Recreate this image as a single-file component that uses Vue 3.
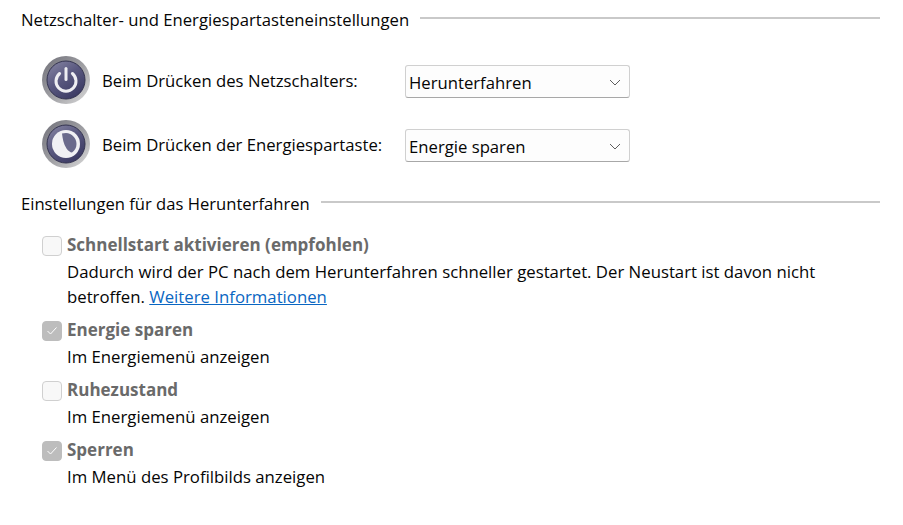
<script setup>
const buttons = [
  { label: 'Beim Drücken des Netzschalters:', value: 'Herunterfahren', icon: 'power' },
  { label: 'Beim Drücken der Energiespartaste:', value: 'Energie sparen', icon: 'sleep' }
]
const options = [
  { title: 'Schnellstart aktivieren (empfohlen)', checked: false, link: true },
  { title: 'Energie sparen', desc: 'Im Energiemenü anzeigen', checked: true },
  { title: 'Ruhezustand', desc: 'Im Energiemenü anzeigen', checked: false },
  { title: 'Sperren', desc: 'Im Menü des Profilbilds anzeigen', checked: true }
]
</script>

<template>
  <div class="page">
    <div class="group-head first">
      <span>Netzschalter- und Energiespartasteneinstellungen</span>
      <div class="rule"></div>
    </div>

    <div class="buttons">
      <div v-for="b in buttons" :key="b.icon" class="button-row">
        <svg class="round-icon" width="48" height="48" viewBox="0 0 48 48">
          <defs>
            <linearGradient :id="'ring-' + b.icon" x1="0" y1="0" x2="1" y2="1">
              <stop offset="0" stop-color="#6f6f78" />
              <stop offset="0.55" stop-color="#a2a2a6" />
              <stop offset="1" stop-color="#dcdcdc" />
            </linearGradient>
            <linearGradient :id="'face-' + b.icon" x1="0" y1="0" x2="0.7" y2="1">
              <stop offset="0" stop-color="#8a89a6" />
              <stop offset="0.5" stop-color="#5a5980" />
              <stop offset="1" stop-color="#3b3a63" />
            </linearGradient>
          </defs>
          <circle cx="24" cy="24" r="24" :fill="'url(#ring-' + b.icon + ')'" />
          <circle cx="24" cy="24" r="19" :fill="'url(#face-' + b.icon + ')'" stroke="#33334f" stroke-width="1" />
          <template v-if="b.icon === 'power'">
            <path d="M17.6 17.5a10 10 0 1 0 12.8 0" fill="none" stroke="#eeeef2" stroke-width="3" stroke-linecap="round" />
            <path d="M24 12.5v11" fill="none" stroke="#eeeef2" stroke-width="3" stroke-linecap="round" />
          </template>
          <template v-else>
            <circle cx="24" cy="24" r="14" fill="#f0f0f4" />
            <path d="M20 13.6c.6 5 1.500 10.500 4.500 14.800 1.800 2.500 3.700 3.800 5.500 4 3-2 4.500-5 4.500-8.400 0-5.800-4.700-10.800-10.500-11-1.400 0-2.800.2-4 .6z" fill="#6a6a8c" />
          </template>
        </svg>
        <span class="button-label">{{ b.label }}</span>
        <div class="select">
          <span>{{ b.value }}</span>
          <svg width="12" height="7" viewBox="0 0 12 7">
            <path d="M1 1l5 5 5-5" fill="none" stroke="#5f5f5f" stroke-width="1" />
          </svg>
        </div>
      </div>
    </div>

    <div class="group-head second">
      <span>Einstellungen für das Herunterfahren</span>
      <div class="rule"></div>
    </div>

    <div class="options">
      <div v-for="o in options" :key="o.title" class="option">
        <div class="check" :class="{ on: o.checked }">
          <svg v-if="o.checked" width="12" height="10" viewBox="0 0 12 10">
            <path d="M1.5 5l3 3 6-6.5" fill="none" stroke="#fff" stroke-width="1" />
          </svg>
        </div>
        <div class="option-text">
          <div class="option-title">{{ o.title }}</div>
          <div v-if="o.link" class="option-desc">
            Dadurch wird der PC nach dem Herunterfahren schneller gestartet. Der Neustart ist davon nicht<br>
            betroffen. <a class="link">Weitere Informationen</a>
          </div>
          <div v-else class="option-desc">{{ o.desc }}</div>
        </div>
      </div>
    </div>
  </div>
</template>

<style scoped>
.page {
  width: 903px;
  height: 525px;
  box-sizing: border-box;
  padding: 0 23px 0 21px;
  background: #fff;
  color: #050505;
  font-family: "Open Sans", "Noto Sans", sans-serif;
  font-size: 16.7px;
  overflow: hidden;
}

.group-head {
  display: flex;
  align-items: center;
  gap: 11px;
  height: 24px;
  white-space: nowrap;
}

.group-head.first {
  margin-top: 7px;
}

.group-head.second {
  margin-top: 23px;
  font-size: 16.6px;
}

.rule {
  flex: 1;
  height: 2px;
  margin-top: -2px;
  background: #c9c9c9;
}

.buttons {
  display: flex;
  flex-direction: column;
  gap: 16px;
  margin-top: 25px;
  padding-left: 21px;
}

.button-row {
  display: flex;
  align-items: center;
  height: 48px;
}

.round-icon {
  flex: none;
}

.button-label {
  width: 303px;
  margin-left: 12px;
  white-space: nowrap;
}

.select {
  display: flex;
  align-items: center;
  justify-content: space-between;
  width: 225px;
  height: 33px;
  margin-top: 3px;
  box-sizing: border-box;
  padding: 1px 8px 0 3px;
  background: #fdfdfd;
  border: 1px solid #d0d0d0;
  border-bottom-color: #a8a8a8;
  border-radius: 3px;
}

.options {
  display: flex;
  flex-direction: column;
  margin-top: 17px;
  padding-left: 21px;
}

.option {
  display: flex;
  gap: 5px;
  margin-bottom: 8px;
}

.check {
  flex: none;
  display: flex;
  align-items: center;
  justify-content: center;
  width: 20px;
  height: 20px;
  margin-top: 4px;
  box-sizing: border-box;
  background: #f8f8f8;
  border: 1px solid #d0d0d0;
  border-radius: 4px;
}

.check.on {
  background: #bdbdbd;
  border-color: #bdbdbd;
}

.option-title {
  margin-bottom: 2px;
  color: #6a6a6a;
  font-size: 17px;
  font-weight: 700;
  line-height: 25px;
}

.option-desc {
  font-size: 16.75px;
  line-height: 25px;
  white-space: nowrap;
}

.link {
  color: #0a66c2;
  text-decoration: underline;
}
</style>

<style>
html, body {
  margin: 0;
  background: #fff;
}
</style>
